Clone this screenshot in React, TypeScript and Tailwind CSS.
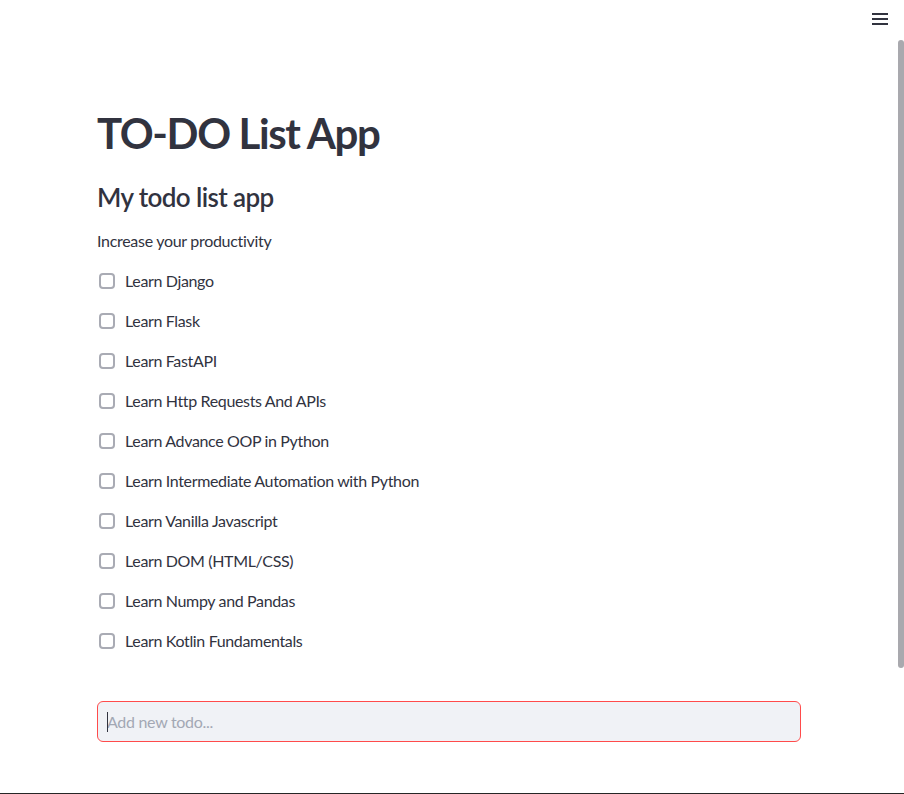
import { useState } from "react";

const todos = [
    "Learn Django",
    "Learn Flask",
    "Learn FastAPI",
    "Learn Http Requests And APIs",
    "Learn Advance OOP in Python",
    "Learn Intermediate Automation with Python",
    "Learn Vanilla Javascript",
    "Learn DOM (HTML/CSS)",
    "Learn Numpy and Pandas",
    "Learn Kotlin Fundamentals",
];

export default function App() {
    const [checked, setChecked] = useState<boolean[]>(todos.map(() => false));

    return (
        <div
            className="relative h-[794px] w-full overflow-hidden border-b border-[#262626] bg-white text-[#31333f]"
            style={{ fontFamily: "Lato, 'Liberation Sans', sans-serif" }}
        >
            {/* Menu button */}
            <button className="absolute right-[16px] top-[13px] flex h-[12px] w-[16px] flex-col justify-between">
                <span className="h-[2px] w-full bg-[#31333f]" />
                <span className="h-[2px] w-full bg-[#31333f]" />
                <span className="h-[2px] w-full bg-[#31333f]" />
            </button>

            {/* Scrollbar */}
            <div className="absolute right-0 top-[40px] h-[628px] w-[6px] rounded-sm bg-[#a9a9ae]" />

            <div className="w-[898px]">
                <div className="mx-auto flex w-[704px] flex-col pt-[107px]">
                    <h1 className="h-[53px] text-[42px] font-bold leading-[53px] tracking-[-1.4px]">
                        TO-DO List App
                    </h1>
                    <h3 className="mt-[20px] h-[34px] text-[26px] font-semibold leading-[34px] tracking-[-0.6px]">
                        My todo list app
                    </h3>
                    <p className="mt-[15px] h-[24px] text-base leading-[24px] tracking-[-0.3px]">
                        Increase your productivity
                    </p>

                    <div className="mt-[16px] flex flex-col gap-[16px]">
                        {todos.map((todo, i) => (
                            <label key={todo} className="flex h-[24px] cursor-pointer items-center">
                                <span
                                    className={
                                        checked[i]
                                            ? "ml-[2px] mr-[10px] h-[16px] w-[16px] rounded-[4px] border-2 border-[#ff4b4b] bg-[#ff4b4b]"
                                            : "ml-[2px] mr-[10px] h-[16px] w-[16px] rounded-[4px] border-2 border-[#a9abb4] bg-white"
                                    }
                                    onClick={() =>
                                        setChecked((c) => c.map((v, j) => (j === i ? !v : v)))
                                    }
                                />
                                <span className="text-base leading-[24px] tracking-[-0.35px]">{todo}</span>
                            </label>
                        ))}
                    </div>

                    <div className="relative mt-[48px] flex h-[41px] items-center rounded-[6px] border border-[#ff4b4b] bg-[#f0f2f6] pl-[9px] pr-[9px]">
                        <span className="absolute left-[9px] top-[10px] h-[20px] w-[1px] bg-[#31333f]" />
                        <input
                            className="w-full bg-transparent text-base tracking-[-0.3px] text-[#31333f] outline-none placeholder:text-[#a3a8b4]"
                            placeholder="Add new todo..."
                        />
                    </div>
                </div>
            </div>
        </div>
    );
}
